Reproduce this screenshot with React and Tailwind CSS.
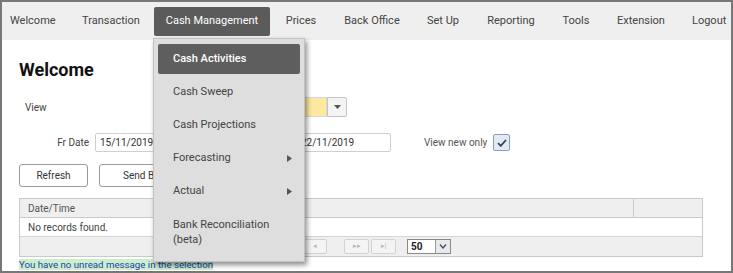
import React from "react";

const navItems = [
  { label: "Welcome", w: "w-[66px] justify-start pl-[8px]" },
  { label: "Transaction", w: "w-[86px] justify-center" },
  { label: "Cash Management", w: "w-[116px] justify-center", active: true },
  { label: "Prices", w: "w-[62px] justify-center" },
  { label: "Back Office", w: "w-[80px] justify-center" },
  { label: "Set Up", w: "w-[62px] justify-center" },
  { label: "Reporting", w: "w-[74px] justify-center" },
  { label: "Tools", w: "w-[56px] justify-center" },
  { label: "Extension", w: "w-[74px] justify-center" },
  { label: "Logout", w: "w-[53px] justify-start pl-[14px]" },
];

const menuItems = [
  { label: "Cash Activities", active: true },
  { label: "Cash Sweep" },
  { label: "Cash Projections" },
  { label: "Forecasting", sub: true },
  { label: "Actual", sub: true },
];

function Caret() {
  return (
    <svg width="5" height="7" viewBox="0 0 5 7" className="shrink-0">
      <path d="M0 0 L5 3.5 L0 7 Z" fill="#555" />
    </svg>
  );
}

function PagerBtn({ label }) {
  return (
    <div className="w-[25px] h-[15px] border border-[#d2d2d2] bg-[#f4f4f4] rounded-[2px] flex items-center justify-center text-[7px] text-[#b5b5b5] leading-none">
      {label}
    </div>
  );
}

export default function App() {
  return (
    <div
      className="relative w-[733px] h-[273px] overflow-hidden border-2 border-[#777] bg-white text-[#333]"
      style={{ fontFamily: "Roboto, 'Liberation Sans', sans-serif" }}
    >
      {/* NAV */}
      <div className="h-[38px] bg-[#efefef] flex items-start pt-[5px] whitespace-nowrap">
        {navItems.map(({ label, w, active }) => (
          <div
            key={label}
            className={`h-[29px] shrink-0 flex items-center text-[11px] ${w} ${
              active ? "bg-[#5b5b5b] text-white rounded-[2px]" : "text-[#444]"
            }`}
          >
            {label}
          </div>
        ))}
      </div>

      {/* BODY */}
      <div className="pl-[17px] pr-[28px]">
        <h1 className="mt-[18px] h-[24px] leading-[24px] text-[18px] font-bold text-[#111]">
          Welcome
        </h1>

        {/* View row */}
        <div className="mt-[15px] h-[20px] flex items-center text-[10px]">
          <div className="w-[181px] pl-[6px] text-[#444]">View</div>
          <div className="w-[127px] h-[20px] bg-[#fde9a0] border border-[#d8d8d8]"></div>
          <div className="w-[20px] h-[20px] bg-[#f4f4f4] border border-[#c4c4c4] rounded-r-[2px] flex items-center justify-center">
            <svg width="7" height="4" viewBox="0 0 7 4">
              <path d="M0 0 L7 0 L3.5 4 Z" fill="#555" />
            </svg>
          </div>
        </div>

        {/* Date row */}
        <div className="mt-[16px] h-[19px] flex items-center text-[10px]">
          <div className="w-[70px] text-right text-[#444]">Fr Date</div>
          <div className="ml-[6px] w-[120px] h-[19px] border border-[#cfcfcf] rounded-[2px] pl-[4px] flex items-center">
            15/11/2019
          </div>
          <div className="ml-[81px] w-[95px] h-[19px] border border-[#cfcfcf] rounded-[2px] pl-[4px] flex items-center">
            22/11/2019
          </div>
          <div className="ml-[33px] text-[#555]">View new only</div>
          <div className="ml-[6px] w-[17px] h-[17px] border border-[#8d9cae] bg-[#e2ebf5] rounded-[2px] flex items-center justify-center">
            <svg width="10" height="8" viewBox="0 0 10 8">
              <path d="M1 4.2 L3.8 6.8 L9 1" stroke="#2f3f55" strokeWidth="1.8" fill="none" />
            </svg>
          </div>
        </div>

        {/* Buttons */}
        <div className="mt-[12px] h-[23px] flex items-center gap-[11px] text-[10px]">
          <div className="w-[69px] h-[23px] border border-[#9a9a9a] rounded-[3px] flex items-center justify-center">
            Refresh
          </div>
          <div className="w-[110px] h-[23px] border border-[#9a9a9a] rounded-[3px] flex items-center pl-[23px]">
            Send Broadcast
          </div>
        </div>

        {/* Table */}
        <div className="mt-[11px] border border-[#c9c9c9] text-[10px]">
          <div className="h-[19px] bg-[#efefef] flex border-b border-[#c9c9c9]">
            <div className="flex-1 flex items-center pl-[8px] text-[#555]">Date/Time</div>
            <div className="w-[69px] border-l border-[#c9c9c9]"></div>
          </div>
          <div className="h-[19px] flex items-center pl-[8px] border-b border-[#d5d5d5] text-[#444]">
            No records found.
          </div>
          <div className="h-[19px] bg-[#efefef] flex items-center">
            <div className="ml-[255px] flex items-center gap-[2px]">
              <PagerBtn label="◂◂" />
              <PagerBtn label="◂" />
            </div>
            <div className="ml-[17px] flex items-center gap-[2px]">
              <PagerBtn label="▸▸" />
              <PagerBtn label="▸|" />
            </div>
            <div className="ml-[11px] h-[15px] flex border border-[#8a8a8a] bg-white">
              <div className="w-[27px] pl-[3px] flex items-center font-bold text-[10px] text-[#222]">50</div>
              <div className="w-[15px] bg-[#e9e9e9] border-l border-[#9a9a9a] flex items-center justify-center">
                <svg width="8" height="5" viewBox="0 0 8 5">
                  <path d="M1 0.5 L4 4 L7 0.5" stroke="#3b5570" strokeWidth="1.4" fill="none" />
                </svg>
              </div>
            </div>
          </div>
        </div>

        {/* Footer message */}
        <div className="mt-[2px] flex">
          <span className="bg-[#cdeecb] text-[#1c3fb0] text-[9.7px] leading-[11px]">
            You have no unread message in the selection
          </span>
        </div>
      </div>

      {/* DROPDOWN MENU */}
      <div className="absolute left-[151px] top-[36px] w-[152px] h-[224px] bg-[#dedede] border border-[#c2c2c2] shadow-[2px_3px_5px_rgba(0,0,0,0.45)] pt-[5px] px-[4px] flex flex-col gap-[3px] text-[11px]">
        {menuItems.map(({ label, active, sub }) => (
          <div
            key={label}
            className={`h-[30px] shrink-0 flex items-center justify-between pl-[15px] pr-[8px] rounded-[2px] ${
              active ? "bg-[#5e5e5e] text-white font-medium" : "text-[#444]"
            }`}
          >
            <span>{label}</span>
            {sub && <Caret />}
          </div>
        ))}
        <div className="pt-[8px] pl-[15px] text-[#444] leading-[15px]">
          Bank Reconciliation
          <br />
          (beta)
        </div>
      </div>
    </div>
  );
}
